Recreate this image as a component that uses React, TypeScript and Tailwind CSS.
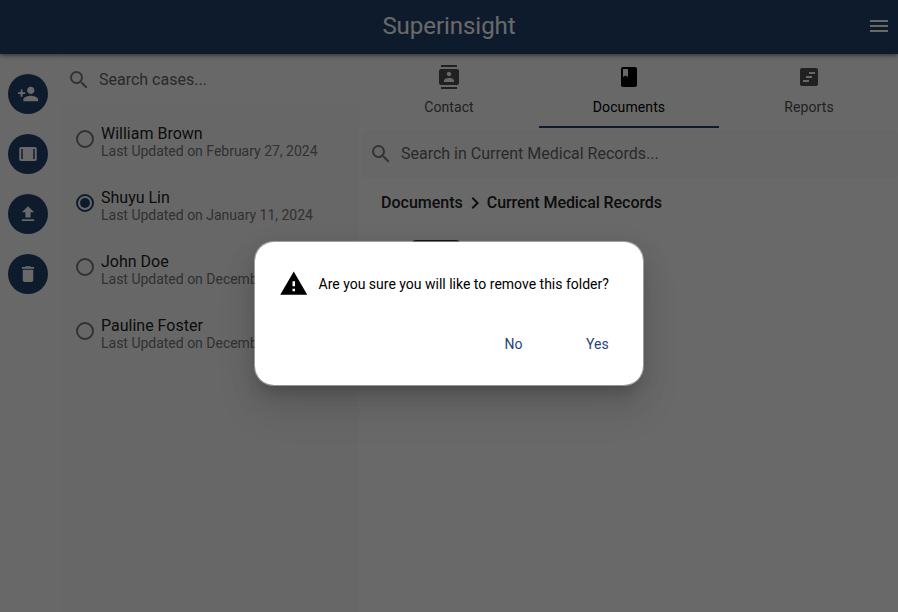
import type { ReactNode } from "react";
import { MdPersonAdd, MdFileUpload, MdDelete, MdSearch, MdContacts, MdClass, MdMenu, MdWarning, MdChevronRight } from "react-icons/md";

const people = [
  { name: "William Brown", date: "February 27, 2024" },
  { name: "Shuyu Lin", date: "January 11, 2024" },
  { name: "John Doe", date: "December 14, 2023" },
  { name: "Pauline Foster", date: "December 12, 2023" },
];

function ArrayIcon() {
  return (
    <svg width="22" height="22" viewBox="0 0 24 24" fill="currentColor" className="p-[0.5px]">
      <path fillRule="evenodd" d="M4 4h16a2 2 0 0 1 2 2v12a2 2 0 0 1-2 2H4a2 2 0 0 1-2-2V6a2 2 0 0 1 2-2zm.3 2.4v11.2H6V6.400zM18 6.400v11.200h1.700V6.400z" />
    </svg>
  );
}

function ReportIcon() {
  return (
    <svg width="24" height="24" viewBox="0 0 24 24" fill="currentColor">
      <path fillRule="evenodd" d="M5 3h14a2 2 0 0 1 2 2v14a2 2 0 0 1-2 2H5a2 2 0 0 1-2-2V5a2 2 0 0 1 2-2zm7 4v2h6V7zm-3 4v2h6v-2zm-3 4v2h6v-2z" />
    </svg>
  );
}

function RailButton({ children }: { children: ReactNode }) {
  return <button className="flex size-10 items-center justify-center rounded-full bg-[#23436f] text-white">{children}</button>;
}

function Tab({ icon, label, active }: { icon: ReactNode; label: string; active?: boolean }) {
  return (
    <div className={active ? "flex h-[74px] w-[180px] shrink-0 flex-col items-center border-b-2 border-[#23436f] pt-[11px] text-black" : "flex h-[74px] w-[180px] shrink-0 flex-col items-center border-b-2 border-transparent pt-[11px] text-[#505050]"}>
      {icon}
      <span className="mt-2 text-sm leading-5 tracking-[0.1px]">{label}</span>
    </div>
  );
}

export default function App() {
  return (
    <div className="relative flex h-[612px] w-[898px] flex-col overflow-hidden bg-white font-['Roboto',sans-serif] text-[#222]">
      <header className="relative z-10 grid h-[54px] shrink-0 grid-cols-[1fr_auto_1fr] items-center bg-[#23436f] pb-[2px] pr-[7px] text-white shadow-[0_1px_5px_rgba(0,0,0,0.6)]">
        <span />
        <h1 className="pl-[7px] text-2xl leading-8 tracking-[-0.04px]">Superinsight</h1>
        <MdMenu className="justify-self-end" size={24} />
      </header>
      <div className="flex min-h-0 flex-1">
        <nav className="flex w-[57px] shrink-0 flex-col gap-5 bg-[#fdfdfd] pl-2 pt-5">
          <RailButton><MdPersonAdd size={22} /></RailButton>
          <RailButton><ArrayIcon /></RailButton>
          <RailButton><MdFileUpload size={22} className="p-[0.5px]" /></RailButton>
          <RailButton><MdDelete size={22} className="p-[0.5px]" /></RailButton>
        </nav>
        <aside className="flex w-[302px] shrink-0 flex-col border-l-2 border-white bg-[#fbfbfb]">
          <div className="flex h-[52px] items-center gap-2 bg-[#fdfdfd] pl-[8px] text-[#666]">
            <MdSearch size={24} className="text-[#7c7c7c]" />
            <span className="text-base">Search cases...</span>
          </div>
          {people.map((p, i) => (
            <div key={p.name} className="flex h-16 gap-[7px] pl-[17px] pt-[18px]">
              <span className={i === 1 ? "mt-[6px] flex size-[18px] shrink-0 items-center justify-center rounded-full border-2 border-[#23436f]" : "mt-[6px] size-[18px] shrink-0 rounded-full border-2 border-[#777]"}>
                {i === 1 && <span className="size-[10px] rounded-full bg-[#23436f]" />}
              </span>
              <div className="whitespace-nowrap">
                <div className="text-base leading-[19px]">{p.name}</div>
                <div className="text-sm leading-4 tracking-[-0.01px] text-[#777]">Last Updated on {p.date}</div>
              </div>
            </div>
          ))}
        </aside>
        <main className="min-w-0 flex-1">
          <div className="flex bg-[#fdfdfd]">
            <Tab icon={<MdContacts size={24} />} label="Contact" />
            <Tab icon={<MdClass size={24} />} label="Documents" active />
            <Tab icon={<ReportIcon />} label="Reports" />
          </div>
          <div className="ml-[2px] mt-[2px] flex h-12 items-center gap-2 rounded bg-[#fafafa] pl-2 text-[#666]">
            <MdSearch size={24} className="text-[#7c7c7c]" />
            <span className="text-base">Search in Current Medical Records...</span>
          </div>
          <div className="flex h-12 items-center pl-[22px] pt-px text-base font-medium">
            <span>Documents</span>
            <MdChevronRight size={24} />
            <span className="tracking-[-0.07px]">Current Medical Records</span>
          </div>
          <div className="ml-[53px] mt-[14px] h-10 w-12 rounded bg-[#333]" />
        </main>
      </div>
      <div className="absolute inset-0 z-20 flex items-start justify-center bg-black/59 pt-[241px]">
        <section className="h-[145px] w-[390px] rounded-[20px] border border-white/40 bg-white bg-clip-padding pl-[24px] pt-[27px] shadow-[0_11px_15px_-7px_rgba(0,0,0,0.2),0_24px_38px_3px_rgba(0,0,0,0.08),0_9px_30px_2px_rgba(0,0,0,0.08)]">
          <div className="flex items-center gap-[10px] text-black">
            <MdWarning size={29.500} />
            <span className="text-sm">Are you sure you will like to remove this folder?</span>
          </div>
          <div className="mt-[35.500px] flex justify-end gap-[63.500px] pr-[34.300px] text-sm text-[#1f4478]">
            <button>No</button>
            <button>Yes</button>
          </div>
        </section>
      </div>
    </div>
  );
}
